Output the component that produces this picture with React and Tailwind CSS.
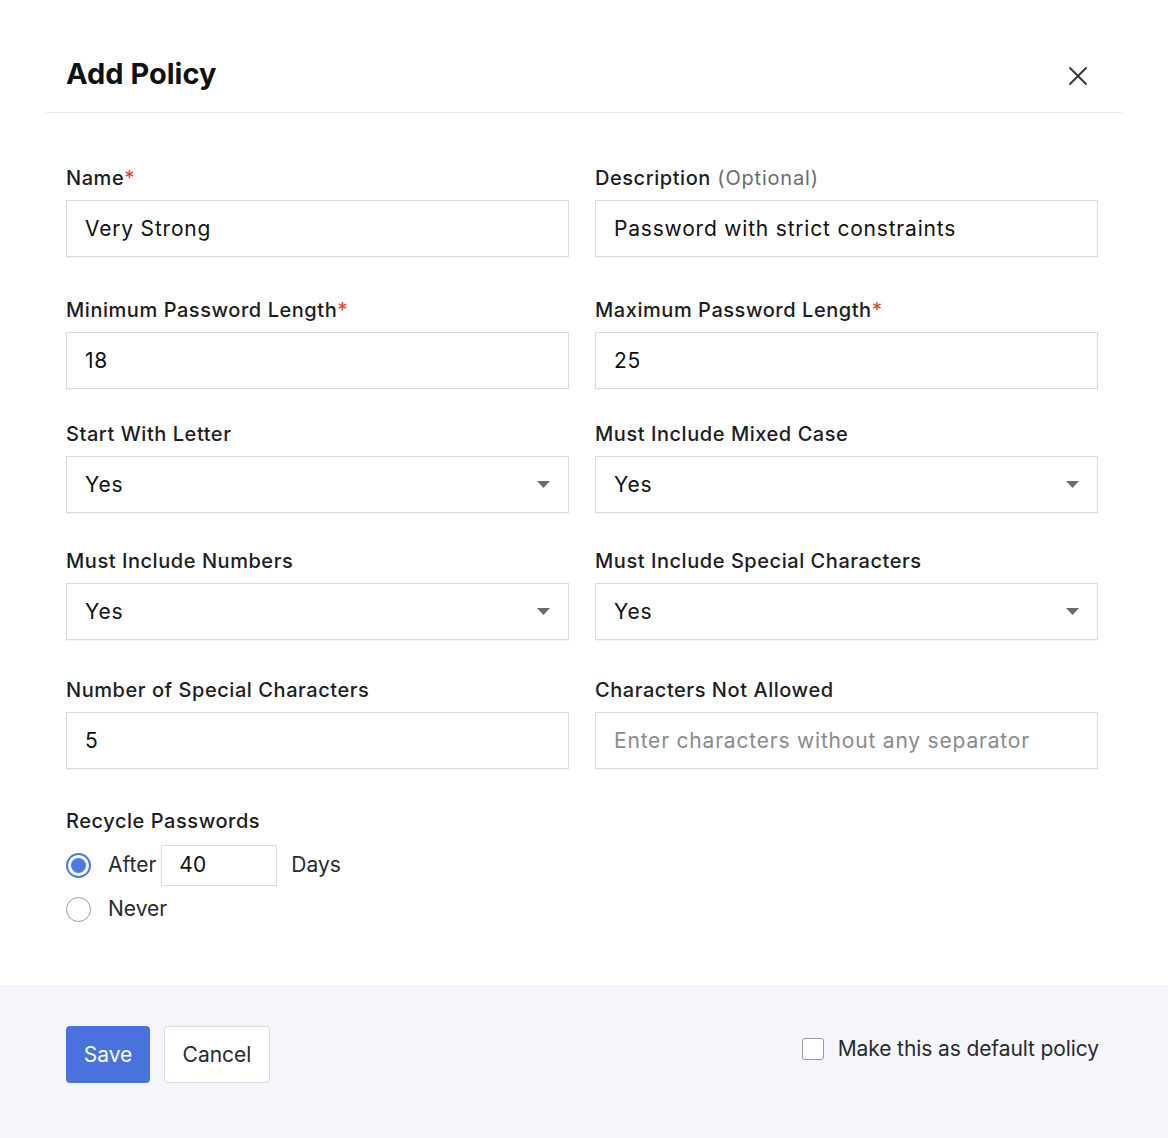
import React from "react";

const font = { fontFamily: "Inter, 'Noto Sans', sans-serif" };

function Label({ children, req, opt }) {
  return (
    <div className="text-[20px] leading-[24px] font-medium text-[#1d1d1f] h-[24px] mb-[10px] tracking-[0.55px] whitespace-nowrap">
      {children}
      {opt && <span className="text-[#6b6b70] font-normal tracking-[0.8px]"> (Optional)</span>}
      {req && <span className="text-[#e0463a]">*</span>}
    </div>
  );
}

function TextBox({ value, placeholder }) {
  return (
    <div className="h-[57px] border border-[#d9dbe1] bg-white flex items-center px-[18px] text-[21px] tracking-[0.8px] shadow-[0_1px_1px_rgba(0,0,0,0.04)]">
      {value ? (
        <span className="text-[#111]">{value}</span>
      ) : (
        <span className="text-[#8a8a8e]">{placeholder}</span>
      )}
    </div>
  );
}

function SelectBox({ value }) {
  return (
    <div className="h-[57px] border border-[#d9dbe1] bg-white flex items-center justify-between pl-[18px] pr-[18px] text-[21px] tracking-[0.8px] shadow-[0_1px_1px_rgba(0,0,0,0.04)]">
      <span className="text-[#111]">{value}</span>
      <svg width="13" height="7" viewBox="0 0 13 7">
        <path d="M0 0 L13 0 L6.5 7 Z" fill="#6b6b6b" />
      </svg>
    </div>
  );
}

export default function App() {
  return (
    <div className="w-[1168px] h-[1138px] bg-white flex flex-col" style={font}>
      <div className="px-[46px]">
        <div className="flex items-center justify-between h-[113px] pt-[36px] border-b border-[#e8eaee] px-[20px]">
          <div className="text-[29px] font-bold text-[#111] tracking-[0px]">Add Policy</div>
          <svg width="20" height="20" viewBox="0 0 20 20" className="mr-[14px] mt-[4px]">
            <path d="M2 2 L18 18 M18 2 L2 18" stroke="#333" strokeWidth="1.8" strokeLinecap="round" />
          </svg>
        </div>
      </div>

      <div className="flex-1 px-[66px] pt-[53px]">
        <div className="grid grid-cols-2 gap-x-[26px] w-[1032px]">
          <div>
            <Label req>Name</Label>
            <TextBox value="Very Strong" />
          </div>
          <div>
            <Label opt>Description</Label>
            <TextBox value="Password with strict constraints" />
          </div>

          <div className="mt-[41px]">
            <Label req>Minimum Password Length</Label>
            <TextBox value="18" />
          </div>
          <div className="mt-[41px]">
            <Label req>Maximum Password Length</Label>
            <TextBox value="25" />
          </div>

          <div className="mt-[33px]">
            <Label>Start With Letter</Label>
            <SelectBox value="Yes" />
          </div>
          <div className="mt-[33px]">
            <Label>Must Include Mixed Case</Label>
            <SelectBox value="Yes" />
          </div>

          <div className="mt-[36px]">
            <Label>Must Include Numbers</Label>
            <SelectBox value="Yes" />
          </div>
          <div className="mt-[36px]">
            <Label>Must Include Special Characters</Label>
            <SelectBox value="Yes" />
          </div>

          <div className="mt-[38px]">
            <Label>Number of Special Characters</Label>
            <TextBox value="5" />
          </div>
          <div className="mt-[38px]">
            <Label>Characters Not Allowed</Label>
            <TextBox placeholder="Enter characters without any separator" />
          </div>
        </div>

        <div className="mt-[40px]">
          <div className="text-[20px] leading-[24px] font-medium tracking-[0.55px] text-[#1d1d1f] h-[24px]">Recycle Passwords</div>
          <div className="flex items-center mt-[12px] h-[40px]">
            <div className="w-[25px] h-[25px] rounded-full border-[2px] border-[#4a78e8] flex items-center justify-center">
              <div className="w-[15px] h-[15px] rounded-full bg-[#4a78e8]" />
            </div>
            <span className="ml-[17px] text-[21px] text-[#2a2a2e]">After</span>
            <div className="ml-[5px] w-[116px] h-[41px] border border-[#d9dbe1] flex items-center px-[17px] text-[21px] text-[#111]">40</div>
            <span className="ml-[14px] text-[21px] text-[#2a2a2e]">Days</span>
          </div>
          <div className="flex items-center mt-[4px] h-[40px]">
            <div className="w-[25px] h-[25px] rounded-full border-[1.5px] border-[#9a9a9e] bg-white" />
            <span className="ml-[17px] text-[21px] text-[#2a2a2e]">Never</span>
          </div>
        </div>
      </div>

      <div className="h-[153px] bg-[#f4f6fb] px-[66px] pt-[41px] flex justify-between items-start">
        <div className="flex gap-[14px]">
          <div className="h-[57px] w-[84px] rounded-[4px] bg-[#4a72dc] text-white text-[21px] flex items-center justify-center">Save</div>
          <div className="h-[57px] w-[106px] rounded-[4px] bg-white border border-[#d9dbe1] text-[#2a2a2e] text-[21px] flex items-center justify-center">Cancel</div>
        </div>
        <div className="flex items-center mt-[7px] mr-[3px]">
          <div className="w-[22px] h-[22px] border-[1.5px] border-[#9a9a9e] rounded-[3px] bg-white" />
          <span className="ml-[14px] text-[21px] tracking-[-0.1px] text-[#2a2a2e]">Make this as default policy</span>
        </div>
      </div>
    </div>
  );
}
